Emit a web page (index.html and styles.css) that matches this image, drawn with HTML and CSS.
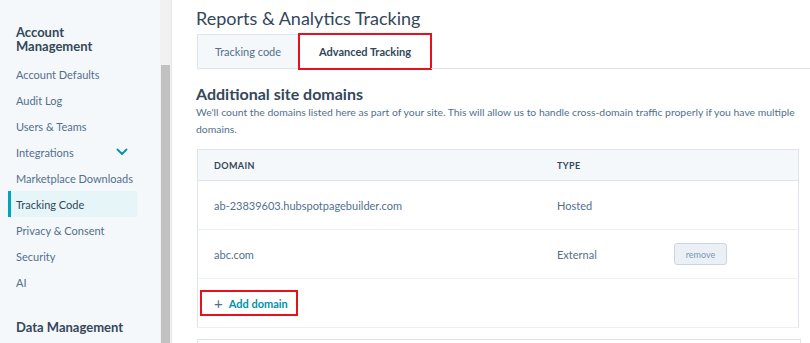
FILE: index.html
```html
<!DOCTYPE html>
<html>
<head>
    <meta charset="UTF-8">
    <meta name="viewport" content="width=device-width, initial-scale=1.0">
    <title>Tracking Code - Settings</title>
    <link rel="stylesheet" href="styles.css">
</head>
<body>

<div class="sidebar">
    <div class="menu">
        <h3 class="menu-title">Account Management</h3>
        <a href="#" class="menu-link">Account Defaults</a>
        <a href="#" class="menu-link">Audit Log</a>
        <a href="#" class="menu-link">Users &amp; Teams</a>
        <a href="#" class="menu-link">Integrations
            <svg class="chevron" width="12" height="8" viewBox="0 0 12 8"><path d="M1.5 1.5 L6 6 L10.5 1.5" fill="none" stroke="#0091ae" stroke-width="1.8" stroke-linecap="round" stroke-linejoin="round"/></svg>
        </a>
        <a href="#" class="menu-link">Marketplace Downloads</a>
        <a href="#" class="menu-link active">Tracking Code</a>
        <a href="#" class="menu-link">Privacy &amp; Consent</a>
        <a href="#" class="menu-link">Security</a>
        <a href="#" class="menu-link">AI</a>
        <h3 class="menu-title section-gap">Data Management</h3>
    </div>
    <div class="scrollbar"><div class="thumb"></div></div>
</div>

<div class="content">
    <h1 class="page-title">Reports &amp; Analytics Tracking</h1>

    <div class="tabs">
        <a href="#" class="tab">Tracking code</a>
        <a href="#" class="tab active marked">Advanced Tracking</a>
        <div class="tab-rest"></div>
    </div>

    <h2 class="section-title">Additional site domains</h2>
    <p class="section-text">We'll count the domains listed here as part of your site. This will allow us to handle cross-domain traffic properly if you have multiple domains.</p>

    <table class="domains">
        <thead>
            <tr>
                <th class="col-domain">Domain</th>
                <th class="col-type">Type</th>
                <th></th>
            </tr>
        </thead>
        <tbody>
            <tr>
                <td>ab-23839603.hubspotpagebuilder.com</td>
                <td>Hosted</td>
                <td></td>
            </tr>
            <tr>
                <td>abc.com</td>
                <td>External</td>
                <td><button class="remove-btn">remove</button></td>
            </tr>
            <tr class="add-row">
                <td colspan="3">
                    <a href="#" class="add-link marked"><span class="plus">+</span> Add domain</a>
                </td>
            </tr>
        </tbody>
    </table>

    <div class="next-card"></div>
</div>

</body>
</html>
```

FILE: styles.css
```css
body {
    margin: 0;
    padding: 0;
    font-family: Lato, "Liberation Sans", Arial, sans-serif;
    color: #33475b;
    background-color: #ffffff;
    display: flex;
    height: 343px;
    overflow: hidden;
}

/* Sidebar styles */
.sidebar {
    width: 172px;
    flex-shrink: 0;
    display: flex;
    background-color: #f5f8fa;
    border-right: 1px solid #e6eaee;
    box-sizing: border-box;
}

.menu {
    width: 160px;
    padding: 25px 0 0 8px;
    box-sizing: border-box;
}

.menu-title {
    width: 110px;
    margin: 0 0 8px 8px;
    font-size: 13px;
    font-weight: 700;
    line-height: 14px;
    color: #33475b;
}

.section-gap {
    width: auto;
    margin-top: 25px;
}

.menu-link {
    display: flex;
    align-items: center;
    justify-content: space-between;
    width: 129px;
    height: 26px;
    padding: 0 9px 0 5px;
    box-sizing: border-box;
    font-size: 11px;
    color: #516f90;
    text-decoration: none;
    white-space: nowrap;
    border-left: 3px solid transparent;
}

.menu-link.active {
    background-color: #e5f5f8;
    border-left-color: #00a4bd;
    color: #33475b;
}

.scrollbar {
    width: 11px;
    background-color: #f1f1f1;
    display: flex;
    flex-direction: column;
    justify-content: flex-end;
}

.thumb {
    height: 278px;
    margin: 0 1px;
    background-color: #c1c1c1;
}

/* Content styles */
.content {
    flex: 1;
    padding: 8px 12px 0 24px;
    min-width: 0;
}

.page-title {
    margin: 0 0 6px 0;
    font-size: 18px;
    font-weight: 400;
    line-height: 20px;
    color: #33475b;
}

.tabs {
    display: flex;
    margin-right: -12px;
    margin-left: 1px;
}

.tab {
    display: flex;
    align-items: center;
    justify-content: center;
    width: 102px;
    height: 35px;
    font-size: 11px;
    color: #516f90;
    text-decoration: none;
    background-color: #f5f8fa;
    border: 1px solid #dfe3eb;
    box-sizing: border-box;
}

.tab.active {
    background-color: #ffffff;
    color: #33475b;
    font-weight: 700;
    border-color: #ffffff;
    width: 132px;
}

.tab-rest {
    flex: 1;
    border-bottom: 1px solid #dfe3eb;
}

/* red annotation box */
.marked {
    outline: 2px solid #e8101a;
    outline-offset: -1px;
}

.section-title {
    margin: 15px 0 0 0;
    font-size: 16px;
    font-weight: 700;
    line-height: 20px;
    color: #33475b;
}

.section-text {
    margin: 0 0 11px 0;
    font-size: 10.4px;
    line-height: 17px;
    color: #516f90;
}

/* Domains table */
.domains {
    width: 602px;
    margin-left: 1px;
    border-collapse: collapse;
    border: 1px solid #dfe3eb;
    font-size: 11px;
}

.domains th {
    height: 30px;
    padding: 0 16px;
    text-align: left;
    font-size: 9px;
    font-weight: 700;
    letter-spacing: 0.4px;
    text-transform: uppercase;
    color: #33475b;
    background-color: #f5f8fa;
    border-bottom: 1px solid #dfe3eb;
}

.col-domain {
    width: 311px;
}

.col-type {
    width: 85px;
}

.domains td {
    height: 48px;
    padding: 0 16px;
    color: #516f90;
    border-bottom: 1px solid #eaf0f6;
}

.remove-btn {
    width: 53px;
    height: 22px;
    padding: 0;
    font-family: inherit;
    font-size: 9px;
    color: #7c98b6;
    background-color: #eaf0f6;
    border: 1px solid #cbd6e2;
    border-radius: 3px;
}

.add-row td {
    padding-left: 3px;
}

.add-link {
    display: inline-flex;
    align-items: center;
    gap: 6px;
    width: 96px;
    height: 24px;
    padding-left: 13px;
    box-sizing: border-box;
    font-size: 11px;
    font-weight: 700;
    color: #0091ae;
    text-decoration: none;
}

.plus {
    font-size: 15px;
    font-weight: 400;
    color: #516f90;
}

.next-card {
    width: 602px;
    height: 20px;
    margin: 11px 0 0 1px;
    border: 1px solid #dfe3eb;
}
```
